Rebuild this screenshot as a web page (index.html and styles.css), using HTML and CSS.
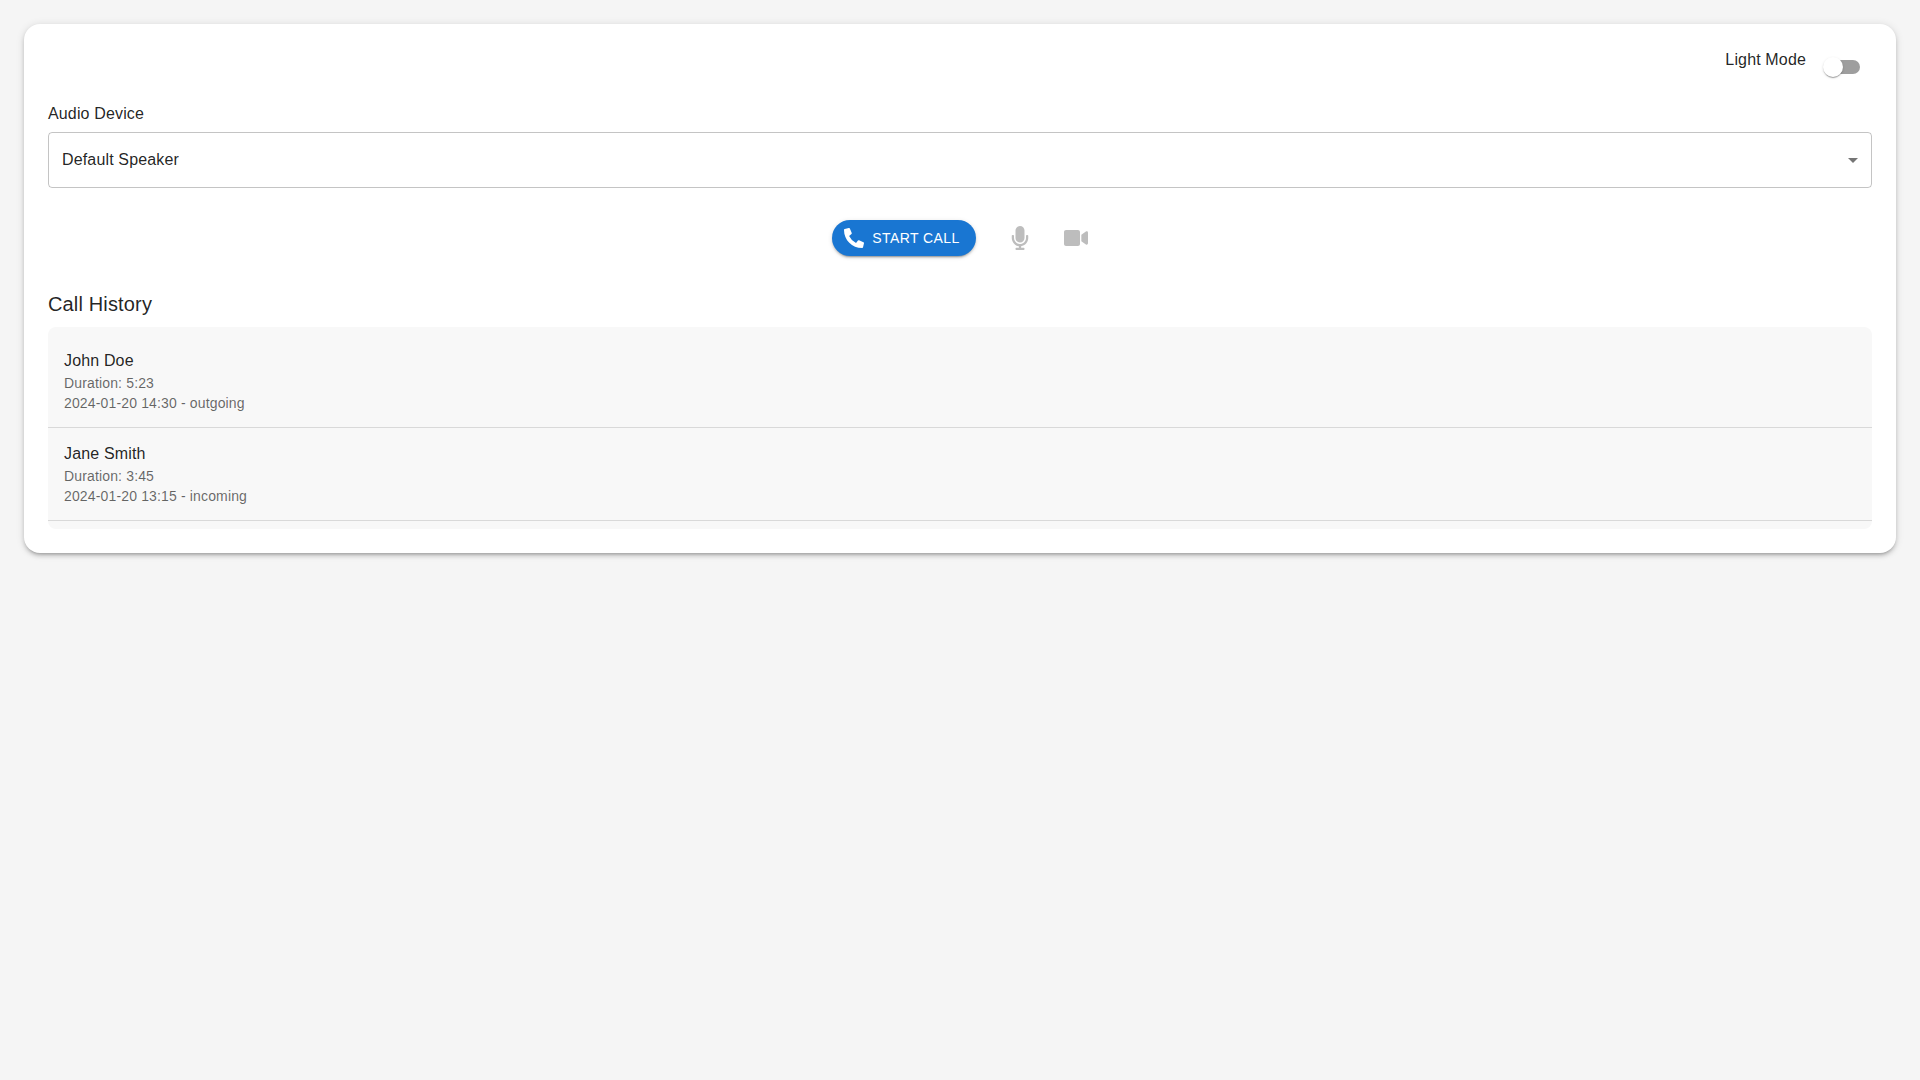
FILE: index.html
```html
<!DOCTYPE html>
<html lang="en">
<head>
  <meta charset="UTF-8">
  <meta name="viewport" content="width=device-width, initial-scale=1.0">
  <title>Call Control</title>
  <link rel="stylesheet" href="styles.css">
</head>
<body>
  <div class="card">
    <div class="header">
      <span class="mode-label">Light Mode</span>
      <label class="switch">
        <input type="checkbox" class="switch-input" aria-label="Light Mode">
        <span class="track"></span>
        <span class="thumb"></span>
      </label>
    </div>

    <p class="label">Audio Device</p>
    <div class="select" role="combobox" tabindex="0">
      <span>Default Speaker</span>
      <svg class="arrow" viewBox="0 0 24 24"><path d="M7 10l5 5 5-5z"/></svg>
    </div>

    <div class="controls">
      <button class="start">
        <svg class="start-icon" viewBox="0 0 512 512"><path d="M497.39 361.8l-112-48a24 24 0 0 0-28 6.9l-49.6 60.6A370.66 370.66 0 0 1 130.6 204.11l60.6-49.6a23.94 23.94 0 0 0 6.9-28l-48-112A24.16 24.16 0 0 0 122.6.61l-104 24A24 24 0 0 0 0 48c0 256.5 207.9 464 464 464a24 24 0 0 0 23.4-18.6l24-104a24.29 24.29 0 0 0-14.01-27.6z"/></svg>
        START CALL
      </button>
      <button class="icon-btn" disabled aria-label="Mute">
        <svg viewBox="0 0 352 512"><path d="M176 352c53.02 0 96-42.98 96-96V96c0-53.02-42.98-96-96-96S80 42.98 80 96v160c0 53.02 42.98 96 96 96zm160-160h-16c-8.84 0-16 7.16-16 16v48c0 74.8-64.49 134.82-140.79 127.38C96.71 376.89 48 317.11 48 250.3V208c0-8.84-7.16-16-16-16H16c-8.84 0-16 7.16-16 16v40.16c0 89.64 63.97 169.55 152 181.69V464H96c-8.84 0-16 7.16-16 16v16c0 8.84 7.16 16 16 16h160c8.84 0 16-7.16 16-16v-16c0-8.84-7.16-16-16-16h-56v-33.77C285.71 418.47 352 344.9 352 256v-48c0-8.84-7.16-16-16-16z"/></svg>
      </button>
      <button class="icon-btn" disabled aria-label="Camera">
        <svg viewBox="0 0 576 512"><path d="M336.2 64H47.8C21.4 64 0 85.4 0 111.8v288.4C0 426.6 21.4 448 47.8 448h288.4c26.4 0 47.8-21.4 47.8-47.8V111.8c0-26.4-21.4-47.8-47.8-47.8zm189.4 37.7L416 177.3v157.4l109.6 75.5c21.2 14.6 50.4-.3 50.4-25.8V127.5c0-25.4-29.1-40.4-50.4-25.8z"/></svg>
      </button>
    </div>

    <h6>Call History</h6>
    <ul class="history">
      <li class="call">
        <span class="name">John Doe</span>
        <span class="info">Duration: 5:23</span>
        <span class="info">2024-01-20 14:30 - outgoing</span>
      </li>
      <li class="call">
        <span class="name">Jane Smith</span>
        <span class="info">Duration: 3:45</span>
        <span class="info">2024-01-20 13:15 - incoming</span>
      </li>
    </ul>
  </div>
</body>
</html>
```
FILE: styles.css
```css
* { box-sizing: border-box; }
body { margin: 0; padding: 24px; min-height: 100vh; background: #f5f5f5; color: rgba(0, 0, 0, 0.87); font-family: "Liberation Sans", Arial, sans-serif; font-size: 16px; line-height: 1.5; letter-spacing: 0.15px; }
.card { background: #fff; padding: 24px; border-radius: 16px; box-shadow: 0 3px 3px -2px rgba(0,0,0,0.2), 0 3px 4px 0 rgba(0,0,0,0.14), 0 1px 8px 0 rgba(0,0,0,0.12); }

.header { display: flex; justify-content: flex-end; align-items: flex-start; margin-bottom: 16px; }
.mode-label { margin-right: 8px; }
.switch { position: relative; width: 58px; height: 38px; padding: 12px; cursor: pointer; }
.switch-input { position: absolute; opacity: 0; margin: 0; }
.track { display: block; height: 14px; border-radius: 7px; background: #000; opacity: 0.38; }
.thumb { position: absolute; top: 9px; left: 9px; width: 20px; height: 20px; border-radius: 50%; background: #fff; box-shadow: 0 2px 1px -1px rgba(0,0,0,0.2), 0 1px 1px 0 rgba(0,0,0,0.14), 0 1px 3px 0 rgba(0,0,0,0.12); }
.switch-input:checked ~ .thumb { left: 29px; background: #1976d2; }

.label { margin: 0 0 0.35em; }
.select { display: flex; justify-content: space-between; align-items: center; height: 56px; padding: 0 6px 0 13px; border: 1px solid rgba(0, 0, 0, 0.23); border-radius: 4px; cursor: pointer; }
.arrow { width: 24px; height: 24px; fill: rgba(0, 0, 0, 0.54); }

.controls { display: flex; justify-content: center; align-items: center; gap: 16px; margin: 24px 0; }
.start { display: inline-flex; align-items: center; margin: 8px; padding: 6px 16px; border: 0; border-radius: 20px; background: #1976d2; color: #fff; font: inherit; font-size: 14px; line-height: 1.75; letter-spacing: 0.4px; box-shadow: 0 3px 1px -2px rgba(0,0,0,0.2), 0 2px 2px 0 rgba(0,0,0,0.14), 0 1px 5px 0 rgba(0,0,0,0.12); cursor: pointer; }
.start-icon { width: 20px; height: 20px; margin: 0 8px 0 -4px; fill: currentColor; }
.icon-btn { display: inline-flex; padding: 8px; border: 0; background: none; color: rgba(0, 0, 0, 0.26); }
.icon-btn svg { width: 24px; height: 24px; fill: currentColor; }

h6 { margin: 0 0 0.35em; font-size: 20px; font-weight: 500; line-height: 1.6; }
.history { list-style: none; margin: 0; padding: 8px 0; border-radius: 8px; background: #f8f8f8; }
.call { display: flex; flex-direction: column; padding: 14px 16px; border-bottom: 1px solid rgba(0, 0, 0, 0.12); }
.info { font-size: 14px; line-height: 1.43; color: rgba(0, 0, 0, 0.6); }
```
